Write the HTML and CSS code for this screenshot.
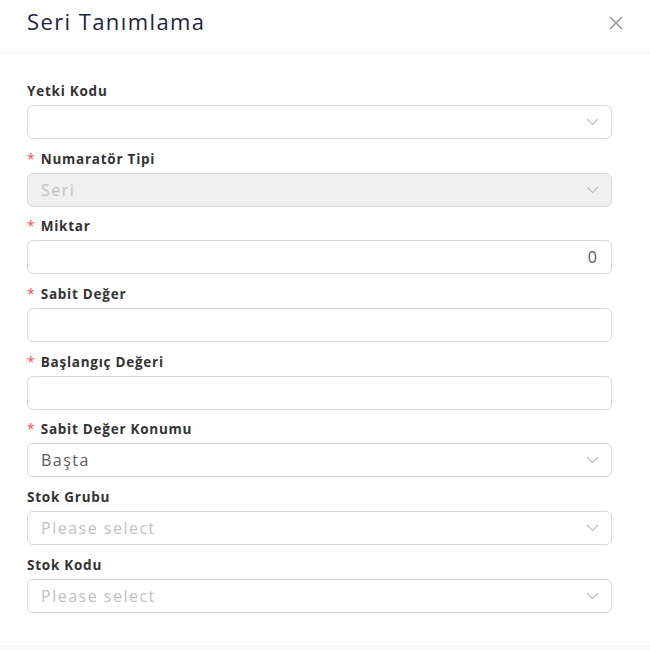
FILE: index.html
```html
<!DOCTYPE html>
<html lang="tr">
<head>
<meta charset="utf-8">
<link rel="stylesheet" href="styles.css">
</head>
<body>
<div class="modal">
  <div class="header">
    <div class="title">Seri Tanımlama</div>
    <svg class="close" width="14" height="14" viewBox="0 0 14 14"><path d="M1 1L13 13M13 1L1 13" stroke="#8c8c8c" stroke-width="1.3" fill="none"/></svg>
  </div>
  <div class="body">
    <div class="field">
      <div class="label">Yetki Kodu</div>
      <div class="input select"><span class="value"></span><svg class="chev" width="13" height="8" viewBox="0 0 13 8"><path d="M1 1L6.5 6.5L12 1" stroke="#bfbfbf" stroke-width="1.2" fill="none"/></svg></div>
    </div>
    <div class="field">
      <div class="label"><span class="req">*</span>Numaratör Tipi</div>
      <div class="input select disabled"><span class="value ph">Seri</span><svg class="chev" width="13" height="8" viewBox="0 0 13 8"><path d="M1 1L6.5 6.5L12 1" stroke="#bfbfbf" stroke-width="1.2" fill="none"/></svg></div>
    </div>
    <div class="field">
      <div class="label"><span class="req">*</span>Miktar</div>
      <div class="input number"><span class="value num">0</span></div>
    </div>
    <div class="field">
      <div class="label"><span class="req">*</span>Sabit Değer</div>
      <div class="input"></div>
    </div>
    <div class="field">
      <div class="label"><span class="req">*</span>Başlangıç Değeri</div>
      <div class="input"></div>
    </div>
    <div class="field">
      <div class="label"><span class="req">*</span>Sabit Değer Konumu</div>
      <div class="input select"><span class="value">Başta</span><svg class="chev" width="13" height="8" viewBox="0 0 13 8"><path d="M1 1L6.5 6.5L12 1" stroke="#bfbfbf" stroke-width="1.2" fill="none"/></svg></div>
    </div>
    <div class="field">
      <div class="label">Stok Grubu</div>
      <div class="input select"><span class="value ph">Please select</span><svg class="chev" width="13" height="8" viewBox="0 0 13 8"><path d="M1 1L6.5 6.5L12 1" stroke="#bfbfbf" stroke-width="1.2" fill="none"/></svg></div>
    </div>
    <div class="field">
      <div class="label">Stok Kodu</div>
      <div class="input select"><span class="value ph">Please select</span><svg class="chev" width="13" height="8" viewBox="0 0 13 8"><path d="M1 1L6.5 6.5L12 1" stroke="#bfbfbf" stroke-width="1.2" fill="none"/></svg></div>
    </div>
  </div>
  <div class="footer-line"></div>
</div>
</body>
</html>
```
FILE: styles.css
```css
* { box-sizing: border-box; }
html, body { margin: 0; padding: 0; background: #fff; }
body { font-family: "Open Sans", "DejaVu Sans", sans-serif; }
.modal { width: 650px; height: 650px; background: #fff; display: flex; flex-direction: column; }
.header {
  height: 53px;
  border-bottom: 1px solid #f0f0f0;
  display: flex;
  align-items: center;
  justify-content: space-between;
  padding: 0 27px 10px 27px;
}
.title { font-size: 22px; color: #1d2442; letter-spacing: 1.4px; }
.close { margin-top: 4px; }
.body { padding: 30px 38px 0 27px; flex: 1; }
.field { margin-bottom: 11.7px; }
.label {
  font-size: 13.5px;
  font-weight: 700;
  color: #333;
  height: 22px;
  line-height: 16px;
  letter-spacing: 0.75px;
  display: flex;
  align-items: flex-start;
}
.req { color: #ff4d4f; margin-right: 6px; font-size: 14px; font-weight: 400; letter-spacing: 0; }
.input {
  height: 34px;
  border: 1px solid #d9d9d9;
  border-radius: 6px;
  display: flex;
  align-items: center;
  padding: 0 12px 0 13px;
  font-size: 16px;
  letter-spacing: 1.5px;
  color: #595959;
  background: #fff;
}
.input.disabled { background: #f0f0f0; }
.value { flex: 1; }
.ph { color: #bfbfbf; }
.num { text-align: right; letter-spacing: 0; padding-right: 2px; }
.chev { flex: none; }
.footer-line { height: 4px; border-top: 1px solid #f0f0f0; background: #fafafa; }
```
